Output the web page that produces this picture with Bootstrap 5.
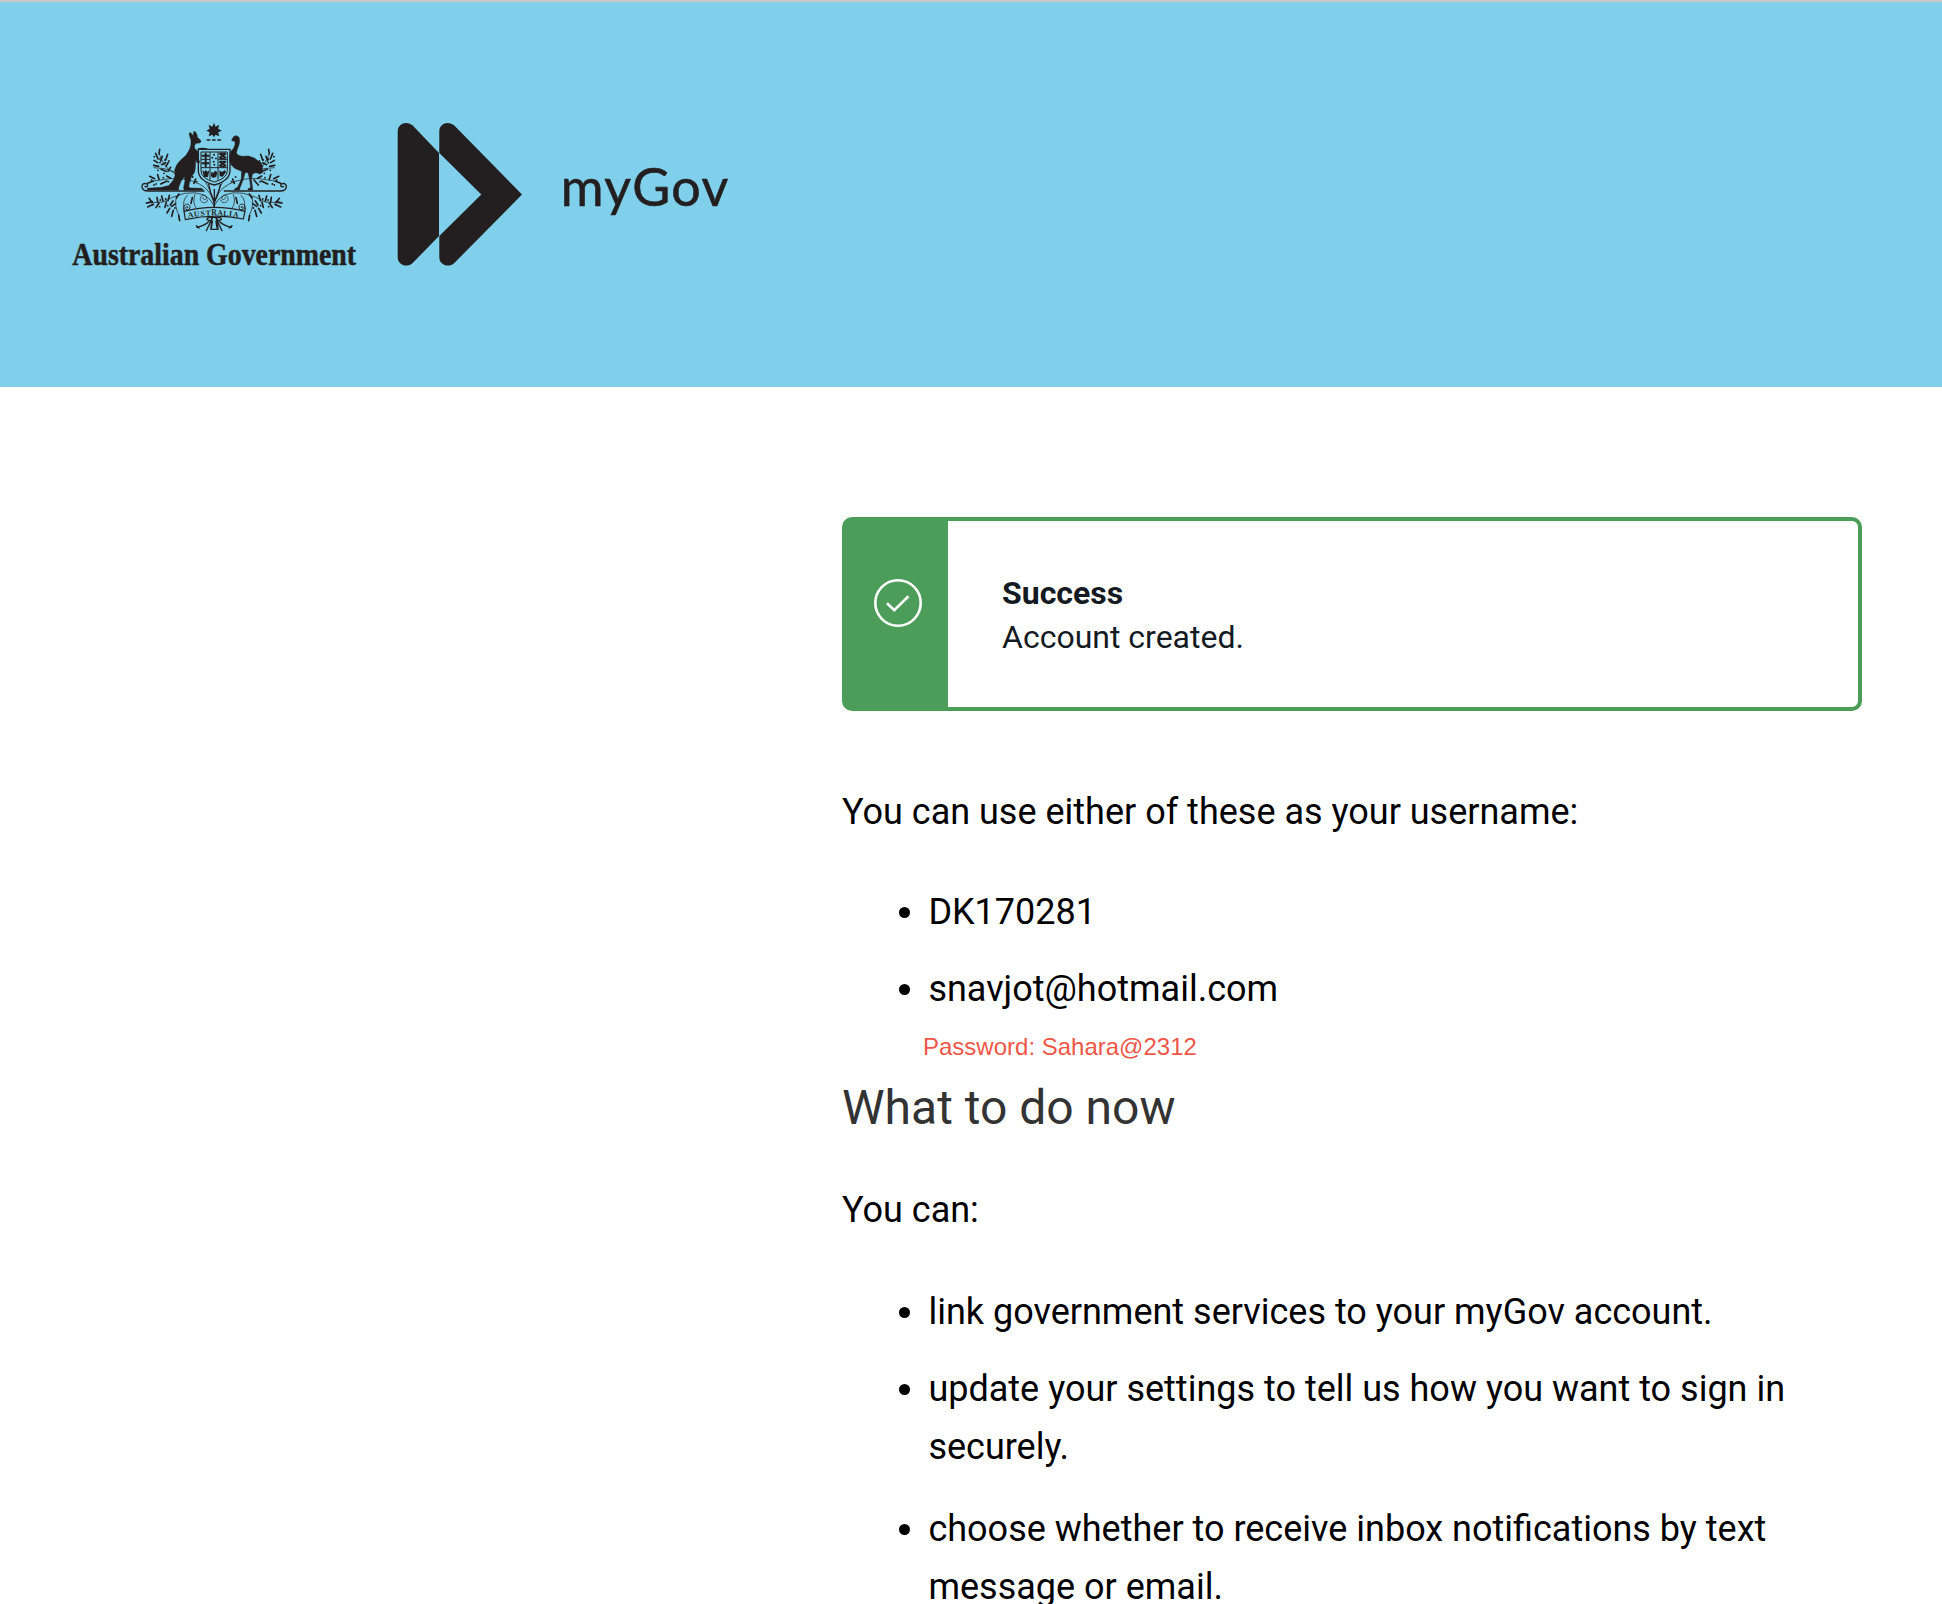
<!DOCTYPE html>
<html lang="en">
<head>
<meta charset="utf-8">
<title>myGov</title>
<meta name="viewport" content="width=device-width, initial-scale=1">
<link href="https://cdn.jsdelivr.net/npm/bootstrap@5.3.0/dist/css/bootstrap.min.css" rel="stylesheet">
<style>
body{font-family:Roboto,"Liberation Sans",sans-serif;font-size:36px;line-height:57.6px;color:#000;background:#fff}
.site-head{height:387px;border-top:2px solid #c8c8c8;background:#80d0eb;padding:108px 0 0 60px}
.crest{width:310px;height:170px}
.arrow-mark{width:130px;height:170px;margin-left:24px}
.brand-word{width:180px;height:170px;margin-left:30px}
.content-col{width:1020px;margin:130px 80px 0 auto}
.notice{height:194px;border:4px solid #4c9d59;border-radius:10px;background:#fff;color:#131a22;font-size:32px;line-height:44px}
.notice-side{width:102px;background:#4c9d59;padding:58px 0 0 28px}
.notice-text{padding:50px 0 0 54px}
.intro-line{margin:73px 0 42.6px}
.bullets{padding-left:86.4px;margin:0}
.bullets li{margin-bottom:19.6px}
.bullets li:last-child{margin-bottom:0}
.bullets .two-line{margin-bottom:24.6px}
.pw-note{font:24px/28px "Liberation Sans",Arial,sans-serif;color:#ee5748;margin:14.400px 0 17px 81px}
.sub-head{font-size:48px;line-height:60px;font-weight:400;color:#333;margin:0 0 44px}
.can-line{margin:0 0 44px}
</style>
<script src="https://cdn.jsdelivr.net/npm/bootstrap@5.3.0/dist/js/bootstrap.bundle.min.js"></script>
</head>
<body>
<div class="vh-100 overflow-hidden">
<header class="site-head d-flex align-items-start">
<svg class="crest flex-shrink-0" viewBox="0 0 930 510" fill="#231f20" role="img" aria-label="Australian Government">
  <!-- star and wreath -->
  <path d="M462 38l4.500 12 11-6-3 12 11 6-11 5 3 12-11-5-4.500 8-5-8-11 5 3-12-10-5 10-6-3-12 11 6z"/>
  <path d="M440 90h45" stroke="#231f20" stroke-width="5" stroke-dasharray="11 5"/>
  <!-- kangaroo -->
  <path d="M387 70L392 68L400 77L401 65L406 65L411 74L412 82L422 91L423 96L418 99L408 100L403 107L404 115L412 123L414 132L414 145L419 155L417 160L411 158L407 148L406 172L404 186L393 203L388 220L386 231L392 234L425 235L430 240H372L371 232L375 212L373 200L363 214L356 232V240H262V235L305 232L330 226L341 213L345 196L344 180L350 165L360 152L378 136L389 118L393 103V90L390 82Z" stroke="#231f20" stroke-width="1.500" stroke-linejoin="round"/>
  <path d="M414 118q14-5 28 0" fill="none" stroke="#231f20" stroke-width="5"/>
  <!-- emu -->
  <path d="M515 92L517 86L522 79L530 77L537 82L539 92L537 104L532 118L529 128L533 135L545 139L565 138L583 144L598 156L607 172V188L600 192L589 188L578 189L574 208L578 236V240H564V236L572 233L569 208L564 188L556 187L549 210L539 236V240H524V236L533 232L544 208L545 184L524 175L514 165L509 152V135L513 124L520 116L525 104V95L521 93Z" stroke="#231f20" stroke-width="1.500" stroke-linejoin="round"/>
  <!-- shield -->
  <path d="M415 118h95v64q0 29-47 43-48-14-48-43z" fill="none" stroke="#231f20" stroke-width="4"/>
  <path d="M423 126h79v56q0 23-39 34-40-11-40-34zM423 173h79M450 126v83M474 126v83M423 148h27M474 148h28" fill="none" stroke="#231f20" stroke-width="3"/>
  <path d="M437 128v43M425 137h23M425 160h23M478 130l20 14m0-14l-20 14M478 154l20 14m0-14l-20 14" stroke="#231f20" stroke-width="6"/>
  <path d="M480 130h16M480 145h16M480 155h16M480 169h16" stroke="#231f20" stroke-width="5"/>
  <path d="M462 134v.1m-5 9v.1m11 2v.1m-7 10v.1m2 9v.1" stroke="#231f20" stroke-width="6" stroke-linecap="round"/>
  <path d="M427 180l7 5 3-6 5 6 6-4-4 20h-12zM454 185l6 4 5-7 7 5-3 13-10 4-6-6zM478 181l8 5 9-6 3 7-10 13-9-1z"/>
  <!-- supporters' foliage, one half -->
  <g id="half" fill="none" stroke="#231f20" stroke-linecap="round">
    <path d="M432 243H264c-23 0-23-26-6-22 9 3 4 13-3 8" stroke-width="4"/>
    <path d="M345 191q-22-10-30-26-13-16-17-33M342 185l-29-9-31-3M463 288q-5-45-45-66-40-20-90-16l-46 7M463 288q-22-49-89-38-38 10-65 26l-48 3M350 260q-10 25 8 58M460 270q-12-35-22-52M443 270c-1 13-24 10-22-5 2-13 20-11 19-1-2 8-12 5-11-1M405 253q-9 26 4 42M382 256q-17 15-9 46" stroke-width="2.200"/>
    <path d="M299 118l-2 14M287 130l7 17M307 139l-5 14M282 151l11 7M323 133l-6 17M281 166l15 3M305 164l12-6M325 157l-7 12M303 178l15 6M332 172l-8 12M269 199l15 7M263 220l17-7M293 194l4 14M302 222l19-9M320 198l12 7M330 225l13-15M407 207l-5 13M267 265l9 12M259 279l18-4M263 291l17-8M291 262l2 14M288 293l9-14M305 258l4 15M315 292l4-16M328 256l-4 16M339 273l-8 12M329 295l-8 14M340 301l-5 18M356 317l3 15M347 281l-12 8M357 252l-8 12M397 263l-4 17" stroke-width="5"/>
    <path d="M283 140v.1M300 158v.1M315 150v.1M327 153v.1M294 181v.1M312 190v.1M275 210v.1M288 222v.1M310 203v.1M325 215v.1M398 201v.1M278 284v.1M299 290v.1M301 270v.1M317 267v.1M345 294v.1M323 287v.1M282 225v.1M410 215v.1M300 147v.1" stroke-width="5.500"/>
    <path d="M451 322q-13 0-9 8l15 4-3 20M446 335q-13 12-35 17M451 337l-12 25M458 322l-7 16M409 347l8 7" stroke-width="4"/>
  </g>
  <use href="#half" transform="translate(925 0) scale(-1 1)"/>
  <path d="M463 292v-55M446 222q4 29 17 54 14-25 18-54M455 322h16l3 36h-21z" fill="none" stroke="#231f20" stroke-width="4"/>
  <!-- motto scroll -->
  <path d="M372 304q91-24 183 0l-5 23q-87-18-174 2z" fill="#80d0eb" stroke="#231f20" stroke-width="3.500"/>
  <path d="M372 304c-6-27 19-26 18-12-1 11-16 9-12 0 3-5 7-2 5 2M555 304c6-27-19-26-18-12 1 11 16 9 12 0-3-5-7-2-5 2" fill="none" stroke="#231f20" stroke-width="3"/>
  <text font-family="Liberation Serif, serif" font-size="23" font-weight="700" x="385 403 422 437 454 472 489 506 518" y="323 320 318 317 316 316 317 318 320" rotate="-10 -8 -6 -3 0 2 5 7 9">AUSTRALIA</text>
  <text x="37" y="466" font-family="Liberation Serif, serif" font-size="94" font-weight="700" textLength="851" lengthAdjust="spacingAndGlyphs" stroke="#231f20" stroke-width="1.500">Australian Government</text>
</svg>
<svg class="arrow-mark flex-shrink-0" viewBox="394 110 130 170" fill="#231f20" aria-hidden="true">
  <path d="M397.700 131.500c0-8.500 9.500-11 15-6l26.300 27.500v83l-26.300 27c-5.500 5-15 2.500-15-6z"/>
  <path d="M439.300 131.500c0-8.500 9.500-11 15-6l67.700 69-67.700 68.500c-5.500 5-15 2.500-15-6v-21l42-41.500-42-41.500z"/>
</svg>
<svg class="brand-word flex-shrink-0" viewBox="554 110 180 170" fill="#231f20" role="img" aria-label="myGov">
  <text x="560.800" y="205.700" font-family="Lato, sans-serif" font-size="52" textLength="167.500" lengthAdjust="spacing" stroke="#231f20" stroke-width=".6">myGov</text>
</svg>
</header>
<main class="content-col">
  <div class="notice d-flex" role="status">
    <div class="notice-side flex-shrink-0">
      <svg class="d-block" width="48" height="48" viewBox="0 0 48 48" fill="none" stroke="#fff" stroke-width="2.600"><circle cx="24" cy="24" r="22.700"/><path d="M13 24.200l7.300 7L34.500 17.300"/></svg>
    </div>
    <div class="notice-text">
      <div class="fw-bold">Success</div>
      <div>Account created.</div>
    </div>
  </div>
  <p class="intro-line">You can use either of these as your username:</p>
  <ul class="bullets">
    <li>DK170281</li>
    <li>snavjot@hotmail.com</li>
  </ul>
  <p class="pw-note">Password: Sahara@2312</p>
  <h2 class="sub-head">What to do now</h2>
  <p class="can-line">You can:</p>
  <ul class="bullets">
    <li>link government services to your myGov account.</li>
    <li class="two-line">update your settings to tell us how you want to sign in securely.</li>
    <li>choose whether to receive inbox notifications by text message or email.</li>
  </ul>
</main>
</div>
</body>
</html>
